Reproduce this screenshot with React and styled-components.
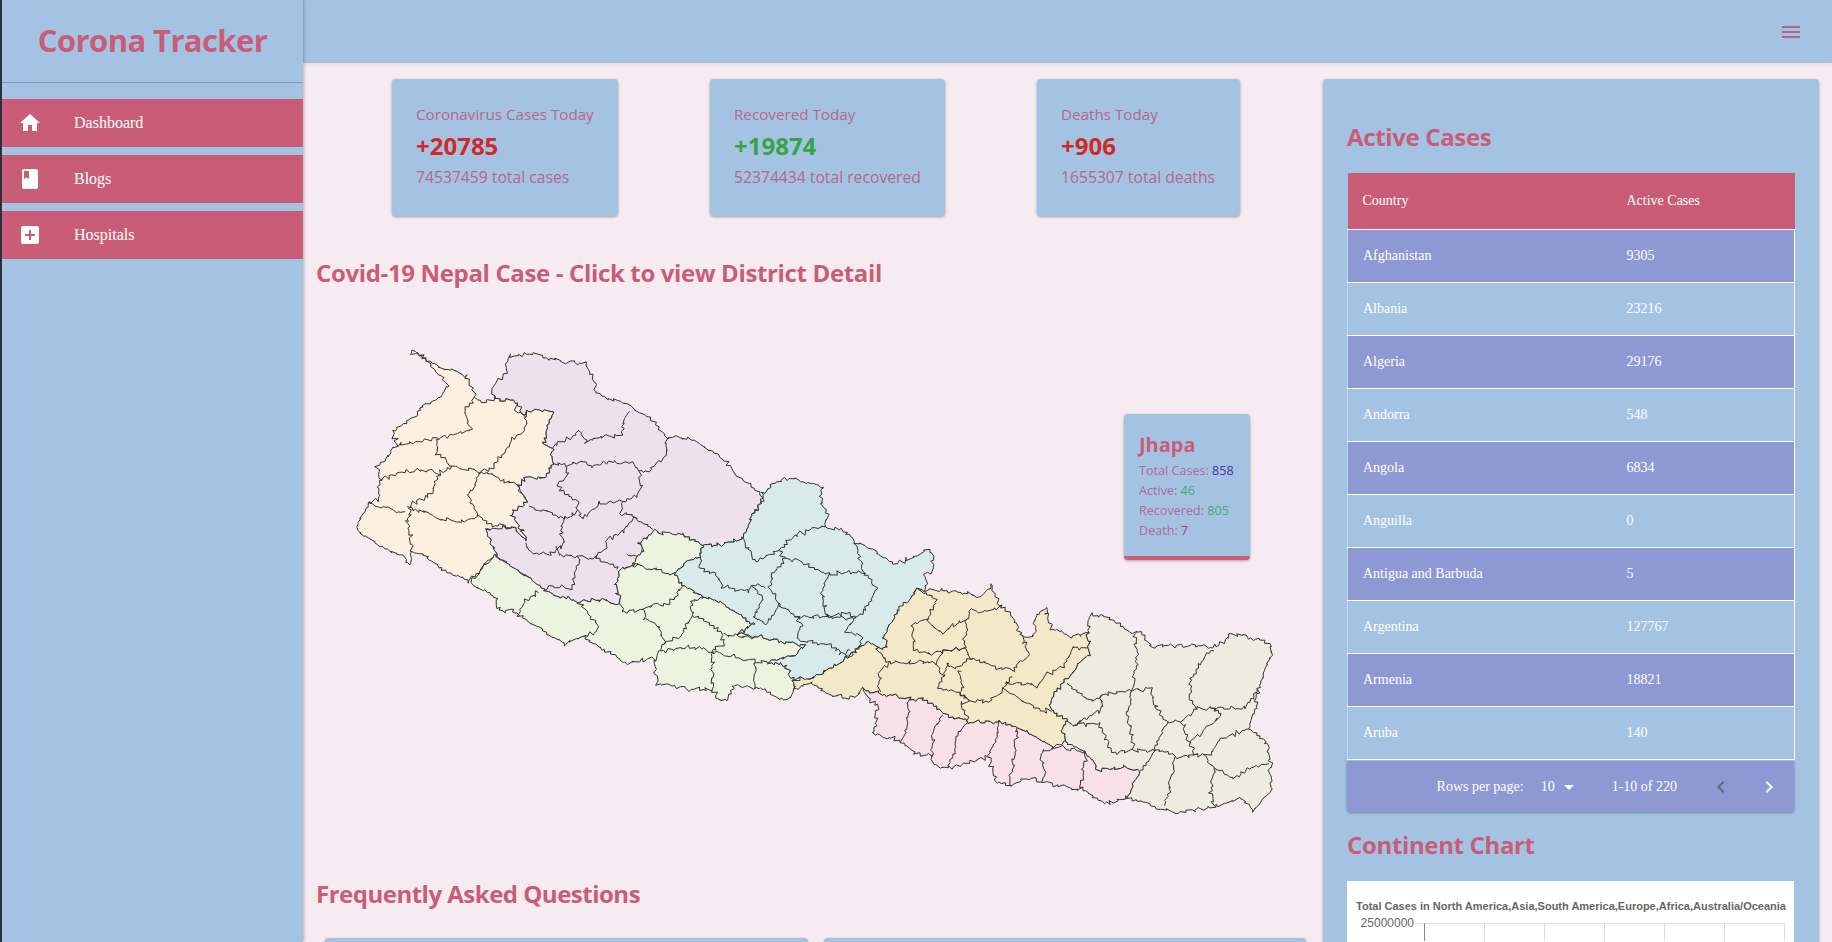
import React from "react";
import styled, { createGlobalStyle } from "styled-components";

const BLUE = "#a4c3e3";
const ROSE = "#c95d78";
const PERI = "#8e99d4";
const UI_FONT = `"Open Sans", "Noto Sans", sans-serif`;

const Global = createGlobalStyle`
  html, body { margin: 0; padding: 0; height: 100%; overflow: hidden; }
  body { background: #f6ebf0; font-family: "Liberation Serif", serif; }
  #root { height: 100%; }
`;

const Shell = styled.div`
  display: flex;
  height: 942px;
  overflow: hidden;
  border-left: 2px solid #2b3038;
`;

const Sidebar = styled.aside`
  width: 301px;
  flex: none;
  background: ${BLUE};
  box-shadow: 1px 0 3px rgba(0, 0, 0, 0.25);
  z-index: 2;
`;

const Brand = styled.div`
  height: 79px;
  padding-bottom: 3px;
  border-bottom: 1px solid rgba(60, 80, 110, 0.35);
  display: flex;
  align-items: center;
  justify-content: center;
  font: 700 31px ${UI_FONT};
  letter-spacing: -0.6px;
  color: ${ROSE};
`;

const NavList = styled.nav`
  display: flex;
  flex-direction: column;
  gap: 8px;
  margin-top: 16px;
`;

const NavItem = styled.a`
  height: 48px;
  background: ${ROSE};
  color: #fff;
  display: flex;
  align-items: center;
  gap: 32px;
  padding-left: 16px;
  font-size: 16px;
  svg { width: 24px; height: 24px; fill: #fff; }
`;

const Main = styled.div`
  flex: 1;
  min-width: 0;
  display: flex;
  flex-direction: column;
`;

const TopBar = styled.header`
  height: 63px;
  flex: none;
  background: ${BLUE};
  box-shadow: 0 2px 4px rgba(0, 0, 0, 0.08);
  display: flex;
  align-items: center;
  justify-content: flex-end;
  padding-right: 29px;
  svg { width: 24px; height: 24px; fill: #b0608f; }
`;

const Content = styled.div`
  display: grid;
  grid-template-columns: 1fr 496px;
  gap: 8px;
  padding: 16px 13px 0 0;
`;

const Left = styled.section`
  min-width: 0;
`;

const StatRow = styled.div`
  display: flex;
  gap: 92px;
  padding-left: 89px;
`;

const StatCard = styled.div`
  width: ${(p) => p.$w}px;
  height: 137px;
  box-sizing: border-box;
  padding: 23px 24px 0;
  background: ${BLUE};
  border-radius: 4px;
  box-shadow: 0 1px 3px rgba(0, 0, 0, 0.35);
  font-family: ${UI_FONT};
`;

const StatLabel = styled.div`
  font-size: 15.2px;
  line-height: 24px;
  color: #b5678f;
  white-space: nowrap;
`;

const StatValue = styled.div`
  font-size: 24px;
  font-weight: 700;
  line-height: 39px;
  color: ${(p) => p.$color};
`;

const StatTotal = styled(StatLabel)`
  font-size: 15.7px;
`;

const Heading = styled.h2`
  margin: 0;
  font: 700 24px/32px ${UI_FONT};
  letter-spacing: -0.35px;
  color: ${ROSE};
  white-space: nowrap;
`;

const MapTitle = styled(Heading)`
  margin: 41px 0 11px 13px;
`;

const MapWrap = styled.div`
  position: relative;
  height: 578px;
  margin-left: 12px;
`;

const MapSvg = styled.svg`
  display: block;
  width: 1000px;
  height: 560px;
`;

const DistrictCard = styled.div`
  position: absolute;
  left: 809px;
  top: 114px;
  width: 126px;
  height: 146px;
  box-sizing: border-box;
  padding: 16px 15px 0;
  background: ${BLUE};
  border-bottom: 4px solid ${ROSE};
  border-radius: 4px;
  box-shadow: 0 1px 3px rgba(0, 0, 0, 0.3);
  font-family: ${UI_FONT};
`;

const DistrictName = styled.div`
  font-size: 20px;
  font-weight: 700;
  line-height: 30px;
  margin-bottom: 1px;
  color: ${ROSE};
`;

const DistrictLine = styled.div`
  font-size: 12.6px;
  line-height: 20px;
  color: #b5679f;
  white-space: nowrap;
  span { color: ${(p) => p.$color}; }
`;

const FaqTitle = styled(Heading)`
  margin-left: 13px;
  letter-spacing: -0.5px;
`;

const FaqGrid = styled.div`
  display: grid;
  grid-template-columns: 483px 482px;
  gap: 16px;
  margin: 28px 0 0 22px;
`;

const FaqCard = styled.div`
  height: 60px;
  background: ${BLUE};
  border-radius: 4px;
  box-shadow: 0 1px 3px rgba(0, 0, 0, 0.3);
`;

const Panel = styled.section`
  height: 900px;
  box-sizing: border-box;
  padding: 42px 24px 0;
  background: ${BLUE};
  border-radius: 4px;
  box-shadow: 0 1px 3px rgba(0, 0, 0, 0.3);
`;

const Table = styled.table`
  width: 447px;
  margin-top: 20px;
  border-collapse: collapse;
  table-layout: fixed;
  font-size: 14px;
  color: #fff;
`;

const HeadCell = styled.th`
  height: 56px;
  padding: 0 16px;
  background: ${ROSE};
  font-weight: 400;
  text-align: left;
  border-bottom: 1px solid #fff;
  &:first-child { padding-left: 15px; }
`;

const Row = styled.tr`
  background: ${(p) => (p.$odd ? PERI : "transparent")};
`;

const Cell = styled.td`
  height: 52px;
  padding: 0 16px;
  border-bottom: 1px solid #fff;
  &:last-child { border-right: 1px solid #fff; }
  &:first-child { border-left: 1px solid #c5d4e8; padding-left: 15px; }
`;

const Pager = styled.div`
  width: 447px;
  height: 51px;
  margin-top: 1px;
  display: flex;
  align-items: center;
  justify-content: flex-end;
  padding-right: 13px;
  box-sizing: border-box;
  background: ${PERI};
  border-radius: 0 0 4px 4px;
  box-shadow: 0 1px 3px rgba(0, 0, 0, 0.35);
  color: #fff;
  font-size: 14px;
  white-space: nowrap;
`;

const PagerSelect = styled.div`
  display: flex;
  align-items: center;
  margin: 0 31px 0 17px;
  svg { width: 24px; height: 24px; fill: #fff; margin-left: 2px; }
`;

const PagerButton = styled.svg`
  width: 24px;
  height: 24px;
  margin-left: ${(p) => p.$gap}px;
  fill: ${(p) => (p.$off ? "#5f6489" : "#fff")};
`;

const ChartTitle = styled(Heading)`
  margin-top: 17px;
`;

const ChartBox = styled.div`
  width: 447px;
  height: 300px;
  margin-top: 20px;
  background: #fff;
  svg { display: block; }
`;

const STATS = [
  { w: 226, label: "Coronavirus Cases Today", value: "+20785", color: "#cf2a27", total: "74537459 total cases" },
  { w: 235, label: "Recovered Today", value: "+19874", color: "#35a546", total: "52374434 total recovered" },
  { w: 203, label: "Deaths Today", value: "+906", color: "#cf2a27", total: "1655307 total deaths" },
];

const ROWS = [
  ["Afghanistan", 9305],
  ["Albania", 23216],
  ["Algeria", 29176],
  ["Andorra", 548],
  ["Angola", 6834],
  ["Anguilla", 0],
  ["Antigua and Barbuda", 5],
  ["Argentina", 127767],
  ["Armenia", 18821],
  ["Aruba", 140],
];

// district outlines, written in 3x page units; east parts were traced with a 1320,210 offset
const PROVINCES = [
  {
    fill: "#ece1ec",
    outline:
      "465,205 460,170 500,130 510,80 580,70 670,95 740,100 770,160 770,190 830,210 880,235 930,265 985,320 1040,325 1130,365 1190,430 1270,500 1235,560 1210,625 1140,645 1095,645 1040,615 950,610 900,640 915,665 900,700 840,720 830,760 845,825 800,810 715,815 620,785 470,675 440,600 380,575 440,595 520,590 565,630 515,550 565,515 535,465 575,435 620,440 640,400 640,350 610,340 635,270 640,250 600,238 560,245 555,255 530,215",
    lines: [
      "610,340 640,350 700,320 720,305 745,335 785,320 845,315 870,240",
      "640,400 685,405 720,395 760,410 810,395 850,400 880,395 900,420 930,425 980,375 985,320",
      "685,405 680,440 655,465 715,520 715,545 735,565 780,520 850,515 900,495 905,460 900,420",
      "850,515 845,550 890,560 945,600",
      "890,560 860,600 805,630 800,655 775,680 840,715",
      "565,530 620,545 680,565 715,545",
      "680,565 665,600 675,640 635,675 570,665 560,640",
      "650,650 665,675 720,680 775,685",
      "720,680 715,720 695,775 630,770 620,785",
      "860,670 905,685",
    ],
  },
  {
    fill: "#fdf0e1",
    outline:
      "212,70 230,60 260,90 300,110 345,125 380,135 405,185 405,205 435,215 465,205 530,215 535,245 560,255 560,245 600,238 640,250 635,270 610,340 640,350 640,400 620,440 590,445 575,435 535,465 545,490 565,515 515,550 565,630 520,590 440,600 470,670 390,755 340,735 300,710 260,680 220,660 210,705 195,680 130,650 55,600 85,520 115,510 125,450 115,410 150,375 175,345 160,305 225,260 245,230 290,210 330,170 280,110 240,75",
    lines: [
      "405,205 375,240 395,300 300,325 175,345",
      "300,325 290,370 340,410 425,425 460,415 510,340 560,295 560,255",
      "340,410 300,430 250,420 190,425 125,450",
      "425,425 535,465",
      "425,425 410,470 385,495 420,560 370,575 320,570 210,530",
      "300,430 280,490 215,525 205,570 220,660",
      "85,520 200,550",
      "420,560 455,585 510,590",
    ],
  },
  {
    fill: "#ecf3df",
    outline:
      "395,755 470,672 620,785 715,815 800,810 845,825 830,760 840,720 895,705 885,700 915,660 900,640 945,605 1040,615 1095,645 1085,680 1040,695 1010,735 1030,765 1080,790 1100,800 1170,835 1245,880 1200,910 1255,920 1330,935 1393,945 1370,975 1290,995 1340,1010 1365,1050 1365,1080 1345,1110 1250,1072 1180,1070 1165,1115 1140,1110 1120,1080 1060,1078 955,1060 945,985 860,1000 790,960 730,920 680,940 620,905 540,860 520,840 480,845 470,800",
    lines: [
      "540,860 550,820 600,785",
      "730,920 775,905 770,875 715,815",
      "845,825 855,845 915,840 920,870 960,890 975,940 965,960 945,985",
      "915,835 945,825 985,825 1030,770",
      "1055,815 1060,860 1040,880 1030,915 975,940",
      "1055,815 1100,800",
      "1060,860 1110,875 1145,910 1155,940 1115,965 1055,950 965,965",
      "1115,965 1250,995 1290,995",
      "1118,965 1122,1080",
      "1250,995 1245,1072",
      "895,705 1010,735",
      "1150,915 1255,920",
    ],
  },
  {
    fill: "#d8ebea",
    outline:
      "1270,490 1320,450 1370,445 1450,475 1445,520 1468,550 1460,590 1520,605 1550,640 1605,655 1625,680 1670,700 1730,680 1760,660 1785,680 1780,720 1760,735 1760,780 1735,780 1710,830 1665,855 1635,920 1645,955 1610,955 1585,935 1530,975 1510,995 1420,1045 1360,1045 1340,1010 1290,995 1370,975 1393,945 1330,935 1255,920 1200,910 1245,880 1170,835 1100,800 1080,790 1030,765 1010,735 1040,695 1085,680 1095,645 1140,645 1210,625 1235,560 1270,510",
    lines: [
      "1460,590 1420,595 1365,620 1320,660 1250,695 1230,660 1210,625",
      "1320,660 1340,685 1300,730 1290,770 1320,820 1370,860 1460,860 1520,850 1550,860",
      "1340,685 1390,695 1470,735 1530,725 1575,730 1550,640",
      "1475,730 1450,790 1460,860",
      "1575,730 1615,775 1595,820 1550,865 1460,860",
      "1550,865 1525,905 1570,925 1565,950 1530,975",
      "1085,680 1085,715 1130,730 1150,770 1230,785 1240,765 1280,770",
      "1240,770 1275,810 1245,865 1280,885 1320,820",
      "1370,860 1390,885 1375,930",
      "1375,930 1440,940 1490,950 1505,975 1530,960",
    ],
  },
];

const EAST_PROVINCES = [
  {
    fill: "#f3e8c8",
    outline:
      "45,840 100,835 190,785 265,725 290,745 325,745 315,710 345,645 415,570 440,570 535,575 610,590 635,555 665,620 700,650 730,710 765,710 770,650 800,625 815,685 880,710 925,700 930,760 860,840 815,900 815,925 865,960 845,985 865,1025 825,1040 715,985 680,965 570,965 490,940 430,900 380,895 250,870 225,895 155,885 100,845 45,870",
    lines: [
      "415,570 470,600 445,655 400,675 405,745 445,762 490,755 555,745 565,660 540,665 495,695 465,685 445,655",
      "555,745 575,770 640,800 700,810 750,765 730,710",
      "565,660 570,630 615,635 670,620",
      "555,745 490,755 470,790 490,825 505,790 530,805 575,775",
      "470,790 430,785 365,790 330,785 300,820 300,870",
      "290,745 330,785",
      "540,810 550,860 540,880 570,900 630,905 675,870 695,825",
      "675,850 735,850 780,860 800,825 850,800 880,745 925,745",
      "490,825 480,860 545,885 570,905 545,910 570,965",
      "675,870 730,905 790,935 815,930",
    ],
  },
  {
    fill: "#f9dfe8",
    outline:
      "250,870 380,895 430,900 490,940 570,965 680,965 715,985 825,1040 920,1055 960,1110 1045,1100 1085,1115 1050,1190 990,1210 905,1170 790,1145 740,1135 690,1160 650,1140 630,1070 510,1105 465,1095 460,1065 410,1065 360,1020 285,1005 295,920",
    lines: [
      "390,900 385,970 365,1020",
      "490,945 460,1010 460,1065",
      "570,965 540,1000 510,1105",
      "665,965 630,1070",
      "715,985 700,1110 690,1160",
      "825,1045 785,1055 800,1130 790,1145",
      "920,1055 905,1170",
    ],
  },
  {
    fill: "#f0ebe1",
    outline:
      "925,700 935,645 990,650 1060,695 1085,700 1120,740 1200,735 1300,740 1320,735 1360,700 1480,730 1470,790 1435,870 1430,930 1410,985 1460,1020 1475,1090 1475,1170 1425,1235 1385,1195 1305,1220 1190,1240 1110,1215 1050,1190 1085,1115 1045,1100 960,1110 920,1055 865,1025 845,985 865,960 815,925 815,900 860,840 930,760",
    lines: [
      "1070,700 1075,770 1060,870 970,885 940,905 860,845",
      "970,885 965,930 885,975 865,960",
      "885,975 960,970 1000,1060 1065,1050 1130,1050 1090,1115",
      "1060,870 1115,865 1130,925 1165,965 1130,1045 1190,1070 1275,1065 1305,1105 1295,1170 1305,1220",
      "1060,870 1045,935 1065,1050",
      "1300,745 1240,830 1230,890 1250,925 1210,965 1230,1025 1250,1065",
      "1250,925 1400,925 1435,870",
      "1295,925 1330,945 1280,985 1230,1030",
      "1165,965 1210,965",
      "1410,985 1320,1020 1300,1060 1275,1065",
      "1305,1105 1365,1135 1410,1105 1470,1090",
      "1190,1070 1160,1215",
    ],
  },
];

// borders wobble by position, so two districts sharing an edge get the same wobble
function wobble(x, y) {
  return [
    x + 4 * Math.sin(x * 0.31 + y * 0.17) + 3 * Math.sin(x * 0.13 - y * 0.41 + 1.3) + 1.6 * Math.sin(x * 1.1 + y * 0.7),
    y + 4 * Math.sin(x * 0.19 - y * 0.29 + 0.7) + 3 * Math.sin(x * 0.43 + y * 0.11 + 2.1) + 1.6 * Math.sin(x * 0.8 - y * 1.2),
  ];
}

function toPath(points, ox, oy, closed) {
  const pts = points.split(" ").map((p) => {
    const [x, y] = p.split(",").map(Number);
    return [x + ox, y + oy];
  });
  if (closed) pts.push(pts[0]);
  const out = [];
  for (let i = 0; i < pts.length - 1; i++) {
    const [x1, y1] = pts[i];
    const [x2, y2] = pts[i + 1];
    const n = Math.max(1, Math.round(Math.hypot(x2 - x1, y2 - y1) / 8));
    for (let k = 0; k < n; k++) {
      out.push(wobble(x1 + ((x2 - x1) * k) / n, y1 + ((y2 - y1) * k) / n));
    }
  }
  out.push(wobble(...pts[pts.length - 1]));
  return "M" + out.map((p) => p[0].toFixed(1) + " " + p[1].toFixed(1)).join("L") + (closed ? "Z" : "");
}

function Province({ data, ox = 0, oy = 0 }) {
  return (
    <g stroke="#333" strokeWidth="3" strokeLinejoin="round">
      <path d={toPath(data.outline, ox, oy, true)} fill={data.fill} />
      {data.lines.map((line) => (
        <path key={line} d={toPath(line, ox, oy, false)} fill="none" />
      ))}
    </g>
  );
}

function NepalMap() {
  return (
    <MapSvg viewBox="-72 -90 3000 1680">
      {PROVINCES.map((p) => (
        <Province key={p.fill} data={p} />
      ))}
      {EAST_PROVINCES.map((p) => (
        <Province key={p.fill} data={p} ox={1320} oy={210} />
      ))}
    </MapSvg>
  );
}

function ContinentChart() {
  const xs = [77, 137, 197, 257, 317, 377, 437];
  return (
    <svg width="447" height="60" viewBox="0 0 447 60">
      <text x="224" y="29" textAnchor="middle" fontFamily="Liberation Sans" fontSize="11" fontWeight="700" fill="#666">
        Total Cases in North America,Asia,South America,Europe,Africa,Australia/Oceania
      </text>
      <text x="67" y="46" textAnchor="end" fontFamily="Liberation Sans" fontSize="12" fill="#666">
        25000000
      </text>
      <line x1="68" x2="437" y1="42.5" y2="42.5" stroke="#ddd" />
      {xs.map((x, i) => (
        <line key={x} x1={x + 0.5} x2={x + 0.5} y1="42" y2="60" stroke={i === 0 ? "#888" : "#ddd"} />
      ))}
    </svg>
  );
}

export default function App() {
  return (
    <>
      <Global />
      <Shell>
        <Sidebar>
          <Brand>Corona Tracker</Brand>
          <NavList>
            <NavItem>
              <svg viewBox="0 0 24 24"><path d="M10 20v-6h4v6h5v-8h3L12 3 2 12h3v8z" /></svg>
              Dashboard
            </NavItem>
            <NavItem>
              <svg viewBox="0 0 24 24"><path d="M18 2H6c-1.1 0-2 .9-2 2v16c0 1.1.9 2 2 2h12c1.1 0 2-.9 2-2V4c0-1.1-.9-2-2-2zM6 4h5v8l-2.5-1.5L6 12V4z" /></svg>
              Blogs
            </NavItem>
            <NavItem>
              <svg viewBox="0 0 24 24"><path d="M19 3H5c-1.11 0-2 .9-2 2v14c0 1.1.89 2 2 2h14c1.1 0 2-.9 2-2V5c0-1.1-.9-2-2-2zm-2 10h-4v4h-2v-4H7v-2h4V7h2v4h4v2z" /></svg>
              Hospitals
            </NavItem>
          </NavList>
        </Sidebar>
        <Main>
          <TopBar>
            <svg viewBox="0 0 24 24"><path d="M3 18h18v-2H3v2zm0-5h18v-2H3v2zm0-7v2h18V6H3z" /></svg>
          </TopBar>
          <Content>
            <Left>
              <StatRow>
                {STATS.map((s) => (
                  <StatCard key={s.label} $w={s.w}>
                    <StatLabel>{s.label}</StatLabel>
                    <StatValue $color={s.color}>{s.value}</StatValue>
                    <StatTotal>{s.total}</StatTotal>
                  </StatCard>
                ))}
              </StatRow>
              <MapTitle>Covid-19 Nepal Case - Click to view District Detail</MapTitle>
              <MapWrap>
                <NepalMap />
                <DistrictCard>
                  <DistrictName>Jhapa</DistrictName>
                  <DistrictLine $color="#5b2a9e">Total Cases: <span>858</span></DistrictLine>
                  <DistrictLine $color="#3fae6a">Active: <span>46</span></DistrictLine>
                  <DistrictLine $color="#3fae6a">Recovered: <span>805</span></DistrictLine>
                  <DistrictLine $color="#c9304a">Death: <span>7</span></DistrictLine>
                </DistrictCard>
              </MapWrap>
              <FaqTitle>Frequently Asked Questions</FaqTitle>
              <FaqGrid>
                <FaqCard />
                <FaqCard />
              </FaqGrid>
            </Left>
            <Panel>
              <Heading>Active Cases</Heading>
              <Table>
                <colgroup>
                  <col width="263" />
                  <col width="184" />
                </colgroup>
                <thead>
                  <tr>
                    <HeadCell>Country</HeadCell>
                    <HeadCell>Active Cases</HeadCell>
                  </tr>
                </thead>
                <tbody>
                  {ROWS.map(([name, count], i) => (
                    <Row key={name} $odd={i % 2 === 0}>
                      <Cell>{name}</Cell>
                      <Cell>{count}</Cell>
                    </Row>
                  ))}
                </tbody>
              </Table>
              <Pager>
                Rows per page:
                <PagerSelect>
                  10
                  <svg viewBox="0 0 24 24"><path d="M7 10l5 5 5-5z" /></svg>
                </PagerSelect>
                1-10 of 220
                <PagerButton $off $gap={32} viewBox="0 0 24 24">
                  <path d="M15.41 7.41L14 6l-6 6 6 6 1.41-1.41L10.83 12z" />
                </PagerButton>
                <PagerButton $gap={24} viewBox="0 0 24 24">
                  <path d="M10 6L8.59 7.41 13.17 12l-4.58 4.58L10 18l6-6z" />
                </PagerButton>
              </Pager>
              <ChartTitle>Continent Chart</ChartTitle>
              <ChartBox>
                <ContinentChart />
              </ChartBox>
            </Panel>
          </Content>
        </Main>
      </Shell>
    </>
  );
}
